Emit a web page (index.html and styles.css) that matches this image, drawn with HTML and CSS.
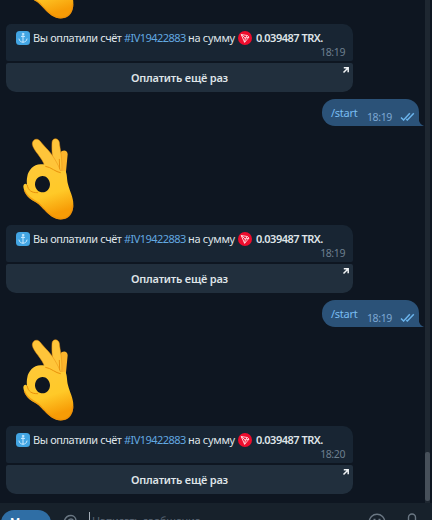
FILE: index.html
```html
<!DOCTYPE html>
<html lang="ru">
<head>
<meta charset="utf-8">
<title>Чат</title>
<link rel="stylesheet" href="styles.css">
</head>
<body>
<svg class="defs" aria-hidden="true">
  <defs>
    <linearGradient id="skin" x1="0" y1="0" x2="0.3" y2="1">
      <stop offset="0" stop-color="#ffc93a"/>
      <stop offset="0.65" stop-color="#ffc928"/>
      <stop offset="1" stop-color="#f79c06"/>
    </linearGradient>
    <symbol id="ok-hand" viewBox="0 0 270 285">
      <path d="M147 92 C149 76 150 66 156 63 C164 59 173 63 173 73 L167 135 L145 120Z" fill="#fcb52c"/>
      <path d="M126 38 C126 22 146 23 148 37 C150 58 158 84 155 130 L136 116 C126 86 125 60 126 38Z" fill="#ffc53a" stroke="#e58d10" stroke-width="1.5"/>
      <path d="M67 43 C66 29 81 22 90 33 C106 53 124 68 134 87 C141 99 149 113 154 129 L104 108 C98 84 69 61 67 43Z" fill="#ffc53a" stroke="#e58d10" stroke-width="1.5"/>
      <path fill-rule="evenodd" d="M92 103 C70 103 55 122 52 139 C50 149 50 156 51 164 C46 158 40 163 40 170 C42 187 54 204 69 212 C86 219 91 228 104 240 C119 257 134 270 157 268 C179 265 191 246 190 222 C190 201 179 184 174 163 C170 147 172 124 164 122 C154 123 146 126 134 116 C121 106 109 102 92 103Z M98 138 C109 138 119 148 120 162 C120 177 110 187 98 187 C86 187 76 177 75 164 C75 149 84 138 98 138Z" fill="url(#skin)"/>
      <path d="M52 166 C54 181 65 189 83 188 M107 109 C125 112 136 126 151 128 M148 88 L149 117" fill="none" stroke="#e9910c" stroke-width="3" stroke-linecap="round"/>
      <path d="M43 180 C52 209 80 209 95 229 C113 251 132 268 158 266 C177 264 188 248 188 226" fill="none" stroke="#ee8f08" stroke-opacity=".7" stroke-width="4"/>
    </symbol>
    <symbol id="anchor" viewBox="0 0 14 14">
      <rect width="14" height="14" rx="3.500" fill="#42a5e3"/>
      <g fill="none" stroke="#c9eaff" stroke-width="1" stroke-linecap="round"><circle cx="7" cy="3" r=".8"/><path d="M7 4v7M5.400 5.400h3.200M3 8c.3 2 2 3.200 4 3.200S10.700 10 11 8"/></g>
    </symbol>
    <symbol id="tron" viewBox="0 0 14 14">
      <circle cx="7" cy="7" r="7" fill="#ee0c2d"/>
      <path d="M3.200 3.500 9.300 4.500 11 6.100 6.600 11.300Z M3.200 3.500 7.300 7.100 11 6.100 M7.300 7.100 6.600 11.300 M7.300 7.100 9.300 4.500" fill="none" stroke="#ffe3e6" stroke-width=".9" stroke-linejoin="round"/>
    </symbol>
    <symbol id="arrow" viewBox="0 0 8 8"><path d="M1.800 1.800H6.200V6.200M6 2 1.500 6.500" fill="none" stroke="#f0f3f5" stroke-width="1.500"/></symbol>
    <symbol id="checks" viewBox="0 0 15 9"><path d="M1 5.500 3.600 8 9.800 1.200M6.300 7.200 7.300 8 13.800 1.200" fill="none" stroke="#6bb4ec" stroke-width="1.500"/></symbol>
  </defs>
</svg>

<main class="chat">
  <section class="turn">
    <svg class="sticker"><use href="#ok-hand"/></svg>
    <article class="invoice">
      <div class="message">
        <p class="line"><svg class="emoji"><use href="#anchor"/></svg><span class="text">Вы оплатили счёт</span><a class="tag">#IV19422883</a><span class="sum">на сумму</span><svg class="emoji"><use href="#tron"/></svg><b class="amount">0.039487 TRX.</b></p>
        <time class="time">18:19</time>
      </div>
      <div class="action"><span>Оплатить ещё раз</span><svg class="arrow"><use href="#arrow"/></svg></div>
    </article>
    <div class="outgoing"><span class="command">/start</span><time class="sent">18:19</time><svg class="checks"><use href="#checks"/></svg><svg class="tail" viewBox="0 0 6 12"><path d="M0 0C0 7 2 10.500 6 12H0Z"/></svg></div>
  </section>
  <section class="turn">
    <svg class="sticker"><use href="#ok-hand"/></svg>
    <article class="invoice">
      <div class="message">
        <p class="line"><svg class="emoji"><use href="#anchor"/></svg><span class="text">Вы оплатили счёт</span><a class="tag">#IV19422883</a><span class="sum">на сумму</span><svg class="emoji"><use href="#tron"/></svg><b class="amount">0.039487 TRX.</b></p>
        <time class="time">18:19</time>
      </div>
      <div class="action"><span>Оплатить ещё раз</span><svg class="arrow"><use href="#arrow"/></svg></div>
    </article>
    <div class="outgoing"><span class="command">/start</span><time class="sent">18:19</time><svg class="checks"><use href="#checks"/></svg><svg class="tail" viewBox="0 0 6 12"><path d="M0 0C0 7 2 10.500 6 12H0Z"/></svg></div>
  </section>
  <section class="turn">
    <svg class="sticker"><use href="#ok-hand"/></svg>
    <article class="invoice">
      <div class="message">
        <p class="line"><svg class="emoji"><use href="#anchor"/></svg><span class="text">Вы оплатили счёт</span><a class="tag">#IV19422883</a><span class="sum">на сумму</span><svg class="emoji"><use href="#tron"/></svg><b class="amount">0.039487 TRX.</b></p>
        <time class="time">18:20</time>
      </div>
      <div class="action"><span>Оплатить ещё раз</span><svg class="arrow"><use href="#arrow"/></svg></div>
    </article>
  </section>
  <div class="scrollbar"><div class="thumb"></div></div>
</main>
<footer class="composer">
  <div class="menu">Меню</div>
  <svg class="clip" viewBox="0 0 16 16"><path d="M1.500 11C2 5 5 1.500 9 1.500c3 0 5 2.500 5 5.500 0 4-3 6-5 6s-3.500-2-3.500-4S7 5 9 5s2.500 1.500 2.500 3"/></svg>
  <div class="field">Написать сообщение...</div>
  <svg class="smile" viewBox="0 0 18 18"><circle cx="9" cy="9" r="7.800"/><path d="M5.500 6.500h2M10.500 6.500h2M5.500 11c2 2.500 5 2.500 7 0"/></svg>
  <svg class="mic" viewBox="0 0 12 18"><rect x="2.500" y="1" width="7" height="11" rx="3.500"/><path d="M1 9c0 7 10 7 10 0"/></svg>
</footer>
</body>
</html>
```

FILE: styles.css
```css
* { box-sizing: border-box; }
body {
  margin: 0;
  width: 432px;
  height: 520px;
  overflow: hidden;
  background: #0e1621;
  color: #dfe4e8;
  font: 11px/16px "Noto Sans", "Open Sans", sans-serif;
}
svg { display: block; flex: none; }
.defs { position: absolute; width: 0; height: 0; }
.chat {
  position: relative;
  height: 503px;
  padding: 0 13px 9px 6px;
  overflow: hidden;
  display: flex;
  flex-direction: column;
  justify-content: flex-end;
}
.turn { flex: none; display: flex; flex-direction: column; align-items: flex-start; }
.sticker { width: 90px; height: 95px; margin-left: 4px; }
.invoice { width: 347px; height: 68px; display: flex; flex-direction: column; gap: 2px; }
.message {
  height: 37px;
  padding: 5px 8px 0 9.5px;
  background: #182533;
  border-radius: 5px 10px 2px 2px;
}
.line { margin: 0; height: 17px; display: flex; align-items: center; white-space: nowrap; }
.emoji { width: 14px; height: 14px; }
.text { width: 91px; margin-left: 3.5px; letter-spacing: -0.41px; }
.tag { width: 64px; color: #62a8e0; letter-spacing: -0.56px; }
.sum { width: 50px; letter-spacing: -0.3px; }
.amount { margin-left: 4px; font-weight: 600; letter-spacing: -0.5px; }
.time { display: block; margin-top: -2px; text-align: right; color: #6d7f8f; font-size: 10.5px; letter-spacing: -0.4px; }
.action {
  position: relative;
  height: 29px;
  display: flex;
  align-items: center;
  justify-content: center;
  background: #212f3d;
  border-radius: 2px 2px 10px 10px;
  font-weight: 600;
  letter-spacing: -0.2px;
}
.arrow { position: absolute; top: 3px; right: 3px; width: 8px; height: 8px; }
.outgoing {
  position: relative;
  align-self: flex-end;
  width: 97px;
  height: 27px;
  margin: 7px 0 4px;
  padding: 0 4px 0 9px;
  display: flex;
  align-items: center;
  background: #2b5278;
  border-radius: 13px 13px 0 13px;
}
.command { width: 36px; color: #79bdf2; letter-spacing: -0.25px; }
.sent { width: 33px; margin-top: 8px; color: #7da8d3; font-size: 10.5px; letter-spacing: -0.4px; }
.checks { width: 15px; height: 9px; margin-top: 8px; }
.tail { position: absolute; right: -5px; bottom: 0; width: 6px; height: 12px; fill: #2b5278; }
.scrollbar { position: absolute; top: 0; right: 2px; width: 5px; height: 503px; background: #1e2731; display: flex; align-items: flex-end; padding-bottom: 2px; }
.thumb { width: 5px; height: 49px; border-radius: 2px; background: #47505a; }
.composer {
  height: 17px;
  overflow: hidden;
  padding: 7px 14px 0 1px;
  display: flex;
  align-items: flex-start;
  background: #17212b;
}
.menu { width: 50px; height: 28px; padding: 4px 0 0 9px; border-radius: 13px; background: #2f6ea5; color: #fff; font-weight: 600; }
.clip, .smile, .mic { fill: none; stroke: #6a7783; stroke-width: 1.4; }
.clip { width: 16px; height: 16px; margin: 4px 11px 0; }
.field { width: 279px; height: 20px; margin-top: 2px; padding-left: 2px; border-left: 1px solid #a5afb8; color: #576472; line-height: 17px; letter-spacing: -0.3px; }
.smile { width: 18px; height: 18px; margin-top: 3px; }
.mic { width: 12px; height: 18px; margin: 3px 0 0 20px; }
```
